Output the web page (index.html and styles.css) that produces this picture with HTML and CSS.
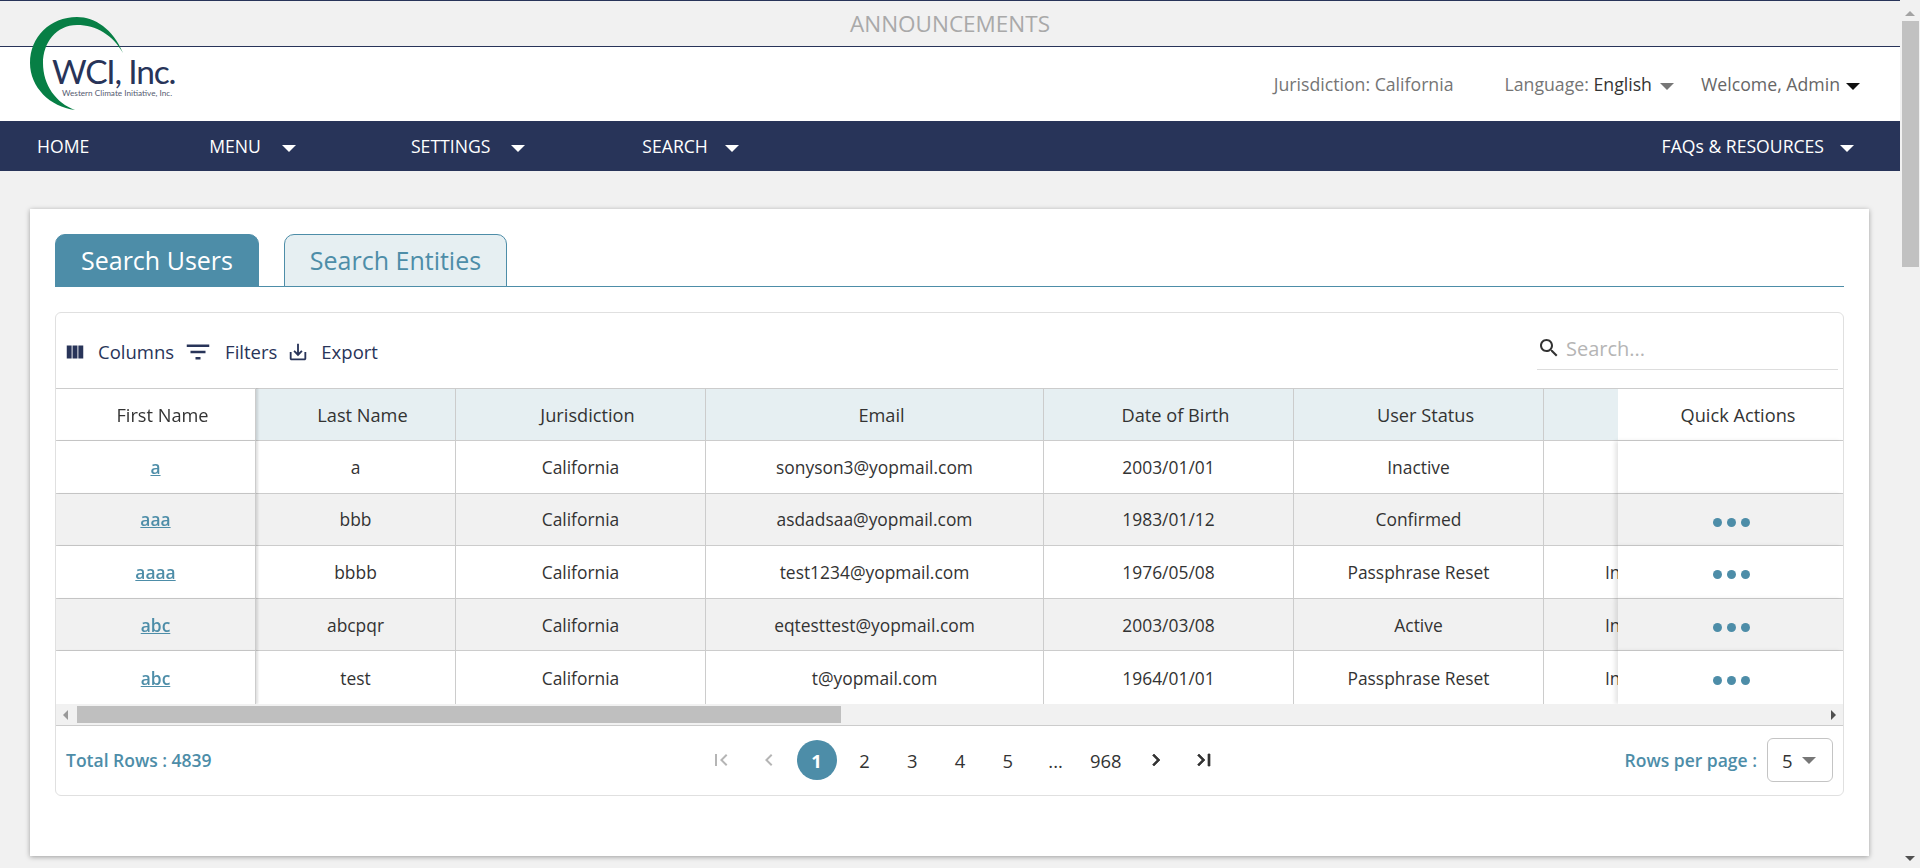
FILE: index.html
```html
<!DOCTYPE html>
<html lang="en">
<head>
    <meta charset="UTF-8">
    <title>WCI, Inc. - Search Users</title>
    <link rel="stylesheet" href="styles.css">
</head>
<body>

    <div class="page">
        <div class="announce">ANNOUNCEMENTS</div>

        <header class="top">
            <svg class="logo" width="160" height="104" viewBox="0 0 160 104">
                <path fill="#077f45" d="M95 38C85 14 67 2 49 2C22 2 2 22 2 48C2 72 22 92 47 95C28 88 15 70 15 48C15 28 28 10 49 10C68 10 85 20 95 38Z"/>
                <text class="logo-name" x="24" y="69">WCI, Inc.</text>
                <text class="logo-sub" x="34" y="81">Western Climate Initiative, Inc.</text>
            </svg>
            <div class="top-right">
                <span class="jurisdiction">Jurisdiction: California</span>
                <span class="lang">Language: <b>English</b><i class="caret caret-grey"></i></span>
                <span class="welcome">Welcome, Admin<i class="caret caret-black"></i></span>
            </div>
        </header>

        <nav class="nav">
            <a class="nav-item nav-home">HOME</a>
            <a class="nav-item nav-menu">MENU<i class="caret caret-white"></i></a>
            <a class="nav-item">SETTINGS<i class="caret caret-white"></i></a>
            <a class="nav-item nav-search">SEARCH<i class="caret caret-white"></i></a>
            <a class="nav-item nav-last">FAQs &amp; RESOURCES<i class="caret caret-white"></i></a>
        </nav>

        <main class="card">
            <div class="tabs">
                <div class="tab tab-active">Search Users</div>
                <div class="tab">Search Entities</div>
            </div>

            <section class="grid-panel">
                <div class="toolbar">
                    <button class="tool tool-columns">
                        <svg width="22" height="22" viewBox="0 0 24 24"><path d="M14.67 5v14H9.33V5h5.34zm1 14H21V5h-5.33v14zm-7.34 0V5H3v14h5.33z"/></svg>
                        Columns
                    </button>
                    <button class="tool tool-filters">
                        <svg width="30" height="30" viewBox="0 0 24 24"><path d="M10 18h4v-2h-4v2zM3 6v2h18V6H3zm3 7h12v-2H6v2z"/></svg>
                        Filters
                    </button>
                    <button class="tool tool-export">
                        <svg width="22" height="22" viewBox="0 0 24 24"><path d="M19 12v7H5v-7H3v7c0 1.1.9 2 2 2h14c1.1 0 2-.9 2-2v-7h-2zm-6 .67l2.59-2.58L17 11.5l-5 5-5-5 1.41-1.41L11 12.67V3h2z"/></svg>
                        Export
                    </button>
                    <label class="search">
                        <svg width="24" height="24" viewBox="0 0 24 24"><path d="M15.5 14h-.79l-.28-.27C15.41 12.59 16 11.11 16 9.5 16 5.91 13.09 3 9.5 3S3 5.91 3 9.5 5.91 16 9.5 16c1.61 0 3.09-.59 4.23-1.57l.27.28v.79l5 4.99L20.49 19l-4.99-5zm-6 0C7.01 14 5 11.99 5 9.5S7.01 5 9.5 5 14 7.01 14 9.5 11.99 14 9.5 14z"/></svg>
                        <input type="text" placeholder="Search...">
                    </label>
                </div>

                <div class="table-wrap">
                    <table class="users">
                        <colgroup>
                            <col class="c-first"><col class="c-last"><col class="c-jur"><col class="c-email">
                            <col class="c-dob"><col class="c-status"><col class="c-type"><col class="c-actions">
                        </colgroup>
                        <thead>
                            <tr>
                                <th class="pin-left">First Name</th>
                                <th>Last Name</th>
                                <th>Jurisdiction</th>
                                <th>Email</th>
                                <th>Date of Birth</th>
                                <th>User Status</th>
                                <th></th>
                                <th class="pin-right">Quick Actions</th>
                            </tr>
                        </thead>
                        <tbody>
                            <tr>
                                <td class="pin-left"><a class="name-link">a</a></td>
                                <td>a</td>
                                <td>California</td>
                                <td>sonyson3@yopmail.com</td>
                                <td>2003/01/01</td>
                                <td>Inactive</td>
                                <td></td>
                                <td class="pin-right"></td>
                            </tr>
                            <tr>
                                <td class="pin-left"><a class="name-link">aaa</a></td>
                                <td>bbb</td>
                                <td>California</td>
                                <td>asdadsaa@yopmail.com</td>
                                <td>1983/01/12</td>
                                <td>Confirmed</td>
                                <td></td>
                                <td class="pin-right"><div class="dots"><i></i><i></i><i></i></div></td>
                            </tr>
                            <tr>
                                <td class="pin-left"><a class="name-link">aaaa</a></td>
                                <td>bbbb</td>
                                <td>California</td>
                                <td>test1234@yopmail.com</td>
                                <td>1976/05/08</td>
                                <td>Passphrase Reset</td>
                                <td>Individual</td>
                                <td class="pin-right"><div class="dots"><i></i><i></i><i></i></div></td>
                            </tr>
                            <tr>
                                <td class="pin-left"><a class="name-link">abc</a></td>
                                <td>abcpqr</td>
                                <td>California</td>
                                <td>eqtesttest@yopmail.com</td>
                                <td>2003/03/08</td>
                                <td>Active</td>
                                <td>Individual</td>
                                <td class="pin-right"><div class="dots"><i></i><i></i><i></i></div></td>
                            </tr>
                            <tr>
                                <td class="pin-left"><a class="name-link">abc</a></td>
                                <td>test</td>
                                <td>California</td>
                                <td>t@yopmail.com</td>
                                <td>1964/01/01</td>
                                <td>Passphrase Reset</td>
                                <td>Individual</td>
                                <td class="pin-right"><div class="dots"><i></i><i></i><i></i></div></td>
                            </tr>
                        </tbody>
                    </table>
                </div>

                <div class="hscroll">
                    <i class="arrow arrow-left"></i>
                    <div class="hscroll-thumb"></div>
                    <i class="arrow arrow-right"></i>
                </div>

                <div class="grid-footer">
                    <div class="total">Total Rows : 4839</div>
                    <div class="pager">
                        <span class="pg pg-off"><svg width="24" height="24" viewBox="0 0 24 24"><path d="M18.41 16.59L13.82 12l4.59-4.59L17 6l-6 6 6 6zM6 6h2v12H6z"/></svg></span>
                        <span class="pg pg-off"><svg width="24" height="24" viewBox="0 0 24 24"><path d="M15.41 7.41L14 6l-6 6 6 6 1.41-1.41L10.83 12z"/></svg></span>
                        <span class="pg pg-current">1</span>
                        <span class="pg">2</span>
                        <span class="pg">3</span>
                        <span class="pg">4</span>
                        <span class="pg">5</span>
                        <span class="pg">...</span>
                        <span class="pg pg-wide">968</span>
                        <span class="pg pg-next"><svg width="24" height="24" viewBox="0 0 24 24"><path d="M10 6L8.59 7.41 13.17 12l-4.58 4.59L10 18l6-6z"/></svg></span>
                        <span class="pg"><svg width="24" height="24" viewBox="0 0 24 24"><path d="M5.59 7.41L10.18 12l-4.59 4.59L7 18l6-6-6-6zM16 6h2v12h-2z"/></svg></span>
                    </div>
                    <div class="per-page">
                        <span>Rows per page :</span>
                        <div class="select">5<i class="caret caret-grey"></i></div>
                    </div>
                </div>
            </section>
        </main>
    </div>

    <aside class="vscroll">
        <i class="arrow arrow-up"></i>
        <div class="vscroll-thumb"></div>
        <i class="arrow arrow-down"></i>
    </aside>

</body>
</html>
```

FILE: styles.css
```css
body {
    font-family: "Open Sans", Arial, sans-serif;
    background-color: #f1f1f1;
    color: #333;
    margin: 0;
    padding: 0;
    height: 868px;
    overflow: hidden;
    display: flex;
}
.page {
    flex: 1;
    min-width: 0;
    position: relative;
}

/* top bars */
.announce {
    height: 45px;
    border-top: 1px solid #283459;
    border-bottom: 1px solid #283459;
    box-sizing: content-box;
    text-align: center;
    line-height: 46px;
    font-size: 22.5px;
    color: #a9a9a9;
}
.top {
    background-color: white;
    height: 74px;
    display: flex;
    justify-content: flex-end;
    align-items: center;
    padding-right: 40px;
}
.logo {
    position: absolute;
    left: 28px;
    top: 15px;
}
.logo-name {
    font-family: Lato, sans-serif;
    font-weight: 400;
    font-size: 33.5px;
    letter-spacing: -1.2px;
    fill: #283459;
}
.logo-sub {
    font-family: Lato, sans-serif;
    font-size: 8.2px;
    fill: #555b70;
}
.top-right {
    display: flex;
    align-items: center;
    font-size: 17.7px;
    color: #757575;
}
.jurisdiction {
    margin-right: 51px;
}
.lang {
    margin-right: 27px;
}
.lang b {
    font-weight: 400;
    color: #333;
}
.welcome {
    color: #666;
}
.caret {
    display: inline-block;
    width: 0;
    height: 0;
    border-left: 7px solid transparent;
    border-right: 7px solid transparent;
    border-top: 7px solid #777;
    vertical-align: middle;
    margin-left: 8px;
}
.caret-black {
    border-top-color: #111;
    margin-left: 6px;
}
.caret-white {
    border-top-color: white;
    margin-left: 21px;
}

.nav {
    background-color: #283459;
    height: 50px;
    display: flex;
    align-items: center;
    padding: 0 46px 0 37px;
    font-size: 17.6px;
    color: white;
}
.nav-item {
    margin-right: 117px;
    white-space: nowrap;
}
.nav-home {
    margin-right: 120px;
}
.nav-menu {
    margin-right: 115px;
}
.nav-search .caret {
    margin-left: 17px;
}
.nav-last {
    margin: 0 0 0 auto;
}
.nav-last .caret {
    margin-left: 16px;
}

/* card and tabs */
.card {
    background-color: white;
    margin: 38px 0 0 30px;
    width: 1839px;
    height: 647px;
    box-sizing: border-box;
    padding: 25px 25px 0 25px;
    box-shadow: 0 1px 5px rgba(0, 0, 0, 0.35);
}
.tabs {
    display: flex;
    gap: 25px;
    height: 53px;
    box-sizing: border-box;
    border-bottom: 1px solid #4d8da8;
}
.tab {
    height: 53px;
    box-sizing: border-box;
    width: 223px;
    text-align: center;
    line-height: 51px;
    font-size: 25px;
    color: #4d8da8;
    background-color: #e6eff2;
    border: 1px solid #4d8da8;
    border-radius: 10px 10px 0 0;
}
.tab-active {
    width: 204px;
    color: white;
    background-color: #4d8da8;
}

/* grid panel */
.grid-panel {
    margin-top: 25px;
    height: 484px;
    box-sizing: border-box;
    border: 1px solid #e0e0e0;
    border-radius: 6px;
}
.toolbar {
    height: 75px;
    box-sizing: border-box;
    display: flex;
    align-items: center;
    padding: 2px 5px 0 8px;
}
.tool {
    display: flex;
    align-items: center;
    background: none;
    border: none;
    padding: 0;
    font-family: inherit;
    font-size: 18.5px;
    color: #283459;
}
.tool svg {
    fill: #283459;
    margin-right: 12px;
}
.tool-columns {
    margin-right: 9px;
}
.tool-filters {
    margin-right: 10px;
}
.search {
    margin-left: auto;
    width: 301px;
    height: 41px;
    margin-top: -6px;
    display: flex;
    align-items: center;
    border-bottom: 1px solid #ddd;
}
.search svg {
    fill: #333;
}
.search input {
    border: none;
    outline: none;
    flex: 1;
    min-width: 0;
    margin-left: 5px;
    padding: 0;
    font-family: inherit;
    font-size: 20px;
    color: #333;
}
.search input::placeholder {
    color: #b5b5b5;
    opacity: 1;
}

/* table */
.table-wrap {
    overflow: hidden;
    height: 316px;
}
.users {
    table-layout: fixed;
    border-collapse: separate;
    border-spacing: 0;
    width: 1915px;
}
.c-first { width: 200px; }
.c-last { width: 200px; }
.c-jur { width: 250px; }
.c-email { width: 338px; }
.c-dob { width: 250px; }
.c-status { width: 250px; }
.c-type { width: 202px; }
.c-actions { width: 225px; }

.users th,
.users td {
    box-sizing: border-box;
    height: 52.6px;
    padding: 0 6px;
    text-align: center;
    font-size: 17.4px;
    font-weight: 400;
    border-right: 1px solid #ccc;
    border-bottom: 1px solid #ccc;
    white-space: nowrap;
    overflow: hidden;
}
.users th {
    padding-left: 20px;
    font-size: 18.2px;
    font-weight: 500;
    background-color: #e6eff2;
    border-top: 1px solid #ccc;
    height: 53px;
}
.users tbody tr:nth-child(even) td {
    background-color: #f1f1f1;
}
.users tbody tr:nth-child(odd) td {
    background-color: white;
}
.users tbody tr:last-child td {
    border-bottom: none;
}
.users .pin-left {
    position: sticky;
    left: 0;
    background-color: white;
    box-shadow: 2px 0 2px rgba(0, 0, 0, 0.12);
    z-index: 2;
}
.users tbody tr:nth-child(even) .pin-left {
    background-color: #f1f1f1;
}
.users .pin-right {
    position: sticky;
    right: 0;
    background-color: white;
    border-right: none;
    z-index: 2;
}
.users th.pin-right {
    padding-left: 21px;
}
.users tbody .pin-right {
    box-shadow: -3px 0 4px rgba(0, 0, 0, 0.1);
}
.users tbody tr:nth-child(even) .pin-right {
    background-color: #f1f1f1;
}
.name-link {
    color: #4d8da8;
    font-weight: 600;
    text-decoration: underline;
}
.dots {
    display: flex;
    justify-content: center;
    gap: 5px;
    margin-top: 6px;
    padding-left: 1px;
}
.dots i {
    width: 9px;
    height: 9px;
    border-radius: 50%;
    background-color: #4d8da8;
}

/* fake scrollbars */
.arrow {
    display: block;
    width: 0;
    height: 0;
    flex: none;
}
.hscroll {
    height: 21px;
    background-color: #f1f1f1;
    border-bottom: 1px solid #ccc;
    display: flex;
    align-items: center;
    padding: 0 7px 0 7px;
}
.hscroll-thumb {
    width: 764px;
    height: 17px;
    background-color: #bfbfbf;
    margin: 0 auto 0 8.5px;
}
.arrow-left {
    border-top: 5px solid transparent;
    border-bottom: 5px solid transparent;
    border-right: 5px solid #999;
}
.arrow-right {
    border-top: 5px solid transparent;
    border-bottom: 5px solid transparent;
    border-left: 5px solid #505050;
}
.vscroll {
    width: 20px;
    flex: none;
    height: 868px;
    background-color: #f1f1f1;
    display: flex;
    flex-direction: column;
    align-items: center;
    padding-top: 11px;
    box-sizing: border-box;
}
.vscroll-thumb {
    width: 17px;
    height: 246px;
    margin-top: 5px;
    background-color: #c1c1c1;
}
.arrow-up {
    border-left: 5px solid transparent;
    border-right: 5px solid transparent;
    border-bottom: 5px solid #a3a3a3;
}
.arrow-down {
    margin-top: auto;
    margin-bottom: 7px;
    border-left: 5px solid transparent;
    border-right: 5px solid transparent;
    border-top: 5px solid #505050;
}

/* footer of grid */
.grid-footer {
    height: 70px;
    display: flex;
    align-items: center;
    padding: 0 10px 2px 10px;
    box-sizing: border-box;
    font-size: 17.5px;
}
.total {
    width: 635px;
    flex: none;
    color: #4d8da8;
    font-weight: 600;
}
.pager {
    display: flex;
    align-items: center;
    gap: 7.8px;
    font-size: 18.4px;
}
.pg {
    width: 40px;
    height: 40px;
    display: flex;
    align-items: center;
    justify-content: center;
    color: #333;
}
.pg svg {
    fill: #333;
    stroke: #333;
    stroke-width: 0.7;
}
.pg-off svg {
    fill: #b5b5b5;
    stroke: none;
}
.pg-current {
    background-color: #4d8da8;
    color: white;
    font-weight: 700;
    border-radius: 50%;
}
.pg-wide,
.pg-next {
    margin-left: 2.5px;
}
.per-page {
    margin-left: auto;
    display: flex;
    align-items: center;
    gap: 10px;
    color: #4d8da8;
    font-weight: 600;
}
.select {
    width: 66px;
    height: 44px;
    box-sizing: border-box;
    border: 1px solid #c4c4c4;
    border-radius: 6px;
    display: flex;
    align-items: center;
    padding-left: 14px;
    font-size: 18.5px;
    font-weight: 400;
    color: #333;
}
.select .caret {
    margin-left: 9px;
}
```
